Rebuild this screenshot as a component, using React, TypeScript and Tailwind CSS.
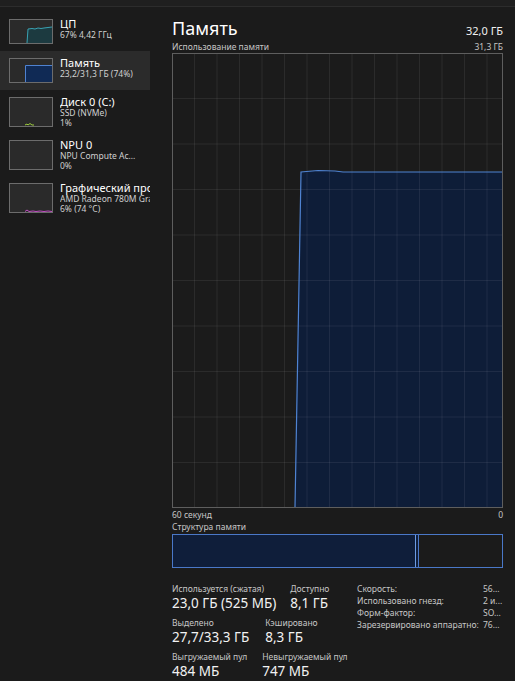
import React from "react";

type Item = {
  title: string;
  lines: string[];
  selected?: boolean;
  thumb: "cpu" | "mem" | "disk" | "npu" | "gpu";
};

const items: Item[] = [
  { title: "ЦП", lines: ["67%  4,42 ГГц"], thumb: "cpu" },
  { title: "Память", lines: ["23,2/31,3 ГБ (74%)"], thumb: "mem", selected: true },
  { title: "Диск 0 (C:)", lines: ["SSD (NVMe)", "1%"], thumb: "disk" },
  { title: "NPU 0", lines: ["NPU Compute Ac...", "0%"], thumb: "npu" },
  { title: "Графический процессор 0", lines: ["AMD Radeon 780M Graphics", "6%  (74 °C)"], thumb: "gpu" },
];

function Thumb({ kind, tall }: { kind: Item["thumb"]; tall: boolean }) {
  const h = tall ? 30 : 25;
  return (
    <div
      className={`w-[44px] shrink-0 border border-[#6c6c6c] bg-[#2a2a2a] ${tall ? "h-[30px]" : "h-[25px]"}`}
    >
      <svg width="42" height={h - 2} viewBox={`0 0 42 ${h - 2}`} className="block">
        {kind === "cpu" && (
          <>
            <path d="M17,23 L18,9 L22,8.5 L25,9 L28,8 L31,8.5 L34,8 L38,7.5 L42,7 L42,23 Z" fill="#1c3a40" />
            <path d="M17,23 L18,9 L22,8.5 L25,9 L28,8 L31,8.5 L34,8 L38,7.5 L42,7" fill="none" stroke="#3aa2b2" strokeWidth="1" />
          </>
        )}
        {kind === "mem" && (
          <>
            <rect x="15" y="6" width="27" height="17" fill="#102a55" />
            <path d="M15.5,23 L15.5,6.5 L42,6.5" fill="none" stroke="#4f82d0" strokeWidth="1" />
          </>
        )}
        {kind === "disk" && (
          <path d="M15,27 L17,26 L18,27 L20,25.5 L22,27 L24,27" fill="none" stroke="#9ccc3c" strokeWidth="1" />
        )}
        {kind === "gpu" && (
          <path d="M15,27.5 L17,26 L19,27.5 L23,27 L26,27.5 L30,27 L34,27.5 L38,27 L42,27.5" fill="none" stroke="#c24fc4" strokeWidth="1" />
        )}
      </svg>
    </div>
  );
}

function SideItem({ item }: { item: Item }) {
  const tall = item.lines.length > 1;
  return (
    <div
      className={`flex items-start gap-[7px] pl-[9px] pt-[7px] ${tall ? "h-[43px]" : "h-[39px]"} ${item.selected ? "bg-[#2b2b2b]" : ""}`}
    >
      <Thumb kind={item.thumb} tall={tall} />
      <div className="-mt-[1px] min-w-0 flex-1 overflow-x-clip whitespace-nowrap">
        <div className="text-[11px] leading-[12px] text-white">{item.title}</div>
        {item.lines.map((l) => (
          <div key={l} className="text-[8.5px] leading-[10px] text-[#d0d0d0]">
            {l}
          </div>
        ))}
      </div>
    </div>
  );
}

function Chart() {
  const vx = Array.from({ length: 14 }, (_, i) => 22.5 * (i + 1) - 1);
  const hy = Array.from({ length: 9 }, (_, i) => 45.5 * (i + 1) - 1);
  return (
    <div className="h-[455px] border border-[#5e5e5e]">
      <svg width="329" height="453" viewBox="0 0 329 453" className="block">
        <path d="M122,453 L128,118 L145,116.5 L162,117 L170,118 L329,118 L329,453 Z" fill="#0e1d38" />
        {vx.map((x) => (
          <line key={x} x1={x} y1="0" x2={x} y2="453" stroke="#ffffff" strokeOpacity="0.07" strokeWidth="1" />
        ))}
        {hy.map((y) => (
          <line key={y} x1="0" y1={y} x2="329" y2={y} stroke="#ffffff" strokeOpacity="0.07" strokeWidth="1" />
        ))}
        <path d="M122,453 L128,118 L145,116.5 L162,117 L170,118 L329,118" fill="none" stroke="#4f83d2" strokeWidth="1.2" />
      </svg>
    </div>
  );
}

function Stat({ label, value }: { label: string; value: string }) {
  return (
    <div className="flex flex-col whitespace-nowrap">
      <div className="text-[8.5px] leading-[12px] text-[#c6c6c6]">{label}</div>
      <div className="text-[13.5px] leading-[17px] text-[#f2f2f2]">{value}</div>
    </div>
  );
}

export default function App() {
  return (
    <div className="flex h-[681px] w-[515px] flex-col overflow-hidden bg-[#1b1b1b] font-['Noto_Sans',sans-serif]">
      <div className="h-[7px] shrink-0 border-b border-[#2c2c2c] bg-[#1f1f1f]" />

      <div className="flex flex-1">
        {/* Sidebar */}
        <div className="w-[150px] shrink-0 pt-[5px]">
          {items.map((it) => (
            <SideItem key={it.title} item={it} />
          ))}
        </div>

        {/* Main */}
        <div className="flex-1 pl-[22px] pr-[12px] pt-[10px]">
          <div className="flex items-baseline justify-between">
            <h1 className="text-[18px] leading-[22px] text-white">Память</h1>
            <span className="text-[11px] text-[#f0f0f0]">32,0 ГБ</span>
          </div>
          <div className="mt-[1px] flex justify-between text-[8.5px] leading-[12px] text-[#c6c6c6]">
            <span>Использование памяти</span>
            <span>31,3 ГБ</span>
          </div>

          <Chart />

          <div className="mt-[1px] flex justify-between text-[8.5px] leading-[12px] text-[#c6c6c6]">
            <span>60 секунд</span>
            <span>0</span>
          </div>
          <div className="text-[8.5px] leading-[12px] text-[#c6c6c6]">Структура памяти</div>

          <div className="mt-[1px] flex h-[34px] border border-[#4a78c8]">
            <div className="w-[243px] border-r border-[#6c9be2] bg-[#0f1e3a]" />
            <div className="w-[3px] border-r border-[#4a78c8] bg-[#0f1e3a]" />
            <div className="flex-1" />
          </div>

          <div className="mt-[15px] flex items-start">
            <div className="flex w-[185px] shrink-0 flex-col gap-[5px]">
              <div className="flex gap-[14px]">
                <Stat label="Используется (сжатая)" value="23,0 ГБ (525 МБ)" />
                <Stat label="Доступно" value="8,1 ГБ" />
              </div>
              <div className="flex gap-[16px]">
                <Stat label="Выделено" value="27,7/33,3 ГБ" />
                <Stat label="Кэшировано" value="8,3 ГБ" />
              </div>
              <div className="flex gap-[15px]">
                <Stat label="Выгружаемый пул" value="484 МБ" />
                <Stat label="Невыгружаемый пул" value="747 МБ" />
              </div>
            </div>
            <div className="grid grid-cols-[126px_auto] content-start whitespace-nowrap text-[8.5px] leading-[12px] text-[#c6c6c6]">
              <span>Скорость:</span>
              <span>56...</span>
              <span>Использовано гнезд:</span>
              <span>2 и...</span>
              <span>Форм-фактор:</span>
              <span>SO...</span>
              <span>Зарезервировано аппаратно:</span>
              <span>76...</span>
            </div>
          </div>
        </div>
      </div>
    </div>
  );
}
